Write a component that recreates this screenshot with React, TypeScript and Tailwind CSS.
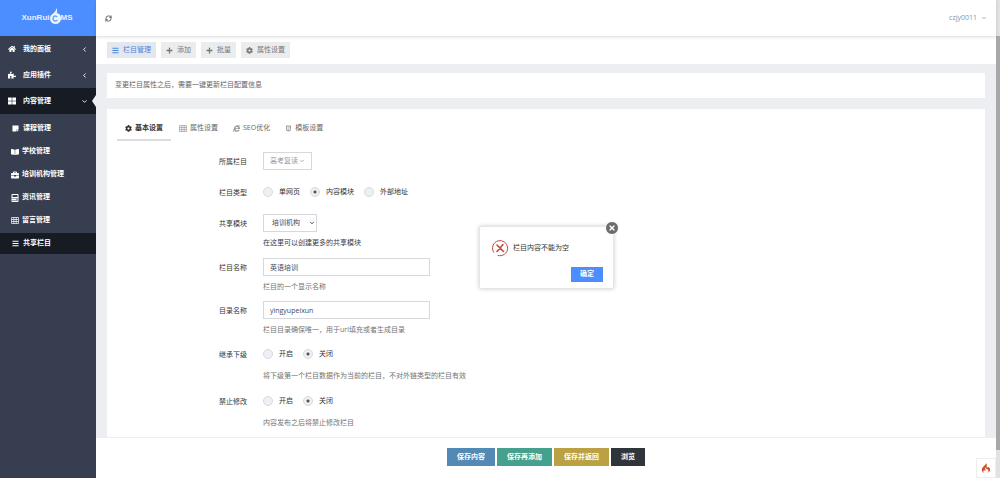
import { useState } from "react";
import type { ReactNode } from "react";
import {
  FaBars,
  FaBookOpen,
  FaBriefcase,
  FaCalculator,
  FaCog,
  FaHome,
  FaHtml5,
  FaInternetExplorer,
  FaPlus,
  FaPuzzlePiece,
  FaStickyNote,
  FaThLarge,
} from "react-icons/fa";
import { SiCodeigniter } from "react-icons/si";
import { ChevronDown, ChevronLeft, RefreshCw, X } from "lucide-react";

function GridIcon() {
  return (
    <svg viewBox="0 0 8 7" className="h-[7px] w-2" fill="none" stroke="currentColor" strokeWidth="0.7">
      <path d="M.5.5h7v6h-7zM.5 2.5h7M.5 4.500h7M2.800.5v6M5.200.5v6" />
    </svg>
  );
}

const menu = [
  { label: "我的面板", icon: <FaHome />, open: false },
  { label: "应用插件", icon: <FaPuzzlePiece />, open: false },
  { label: "内容管理", icon: <FaThLarge />, open: true },
];

const subMenu = [
  { label: "课程管理", icon: <FaStickyNote size={7} />, narrow: true },
  { label: "学校管理", icon: <FaBookOpen size={8} /> },
  { label: "培训机构管理", icon: <FaBriefcase size={8} /> },
  { label: "资讯管理", icon: <FaCalculator size={8} /> },
  { label: "留言管理", icon: <GridIcon /> },
  { label: "共享栏目", icon: <FaBars size={7} />, narrow: true, active: true },
];

const toolbar = [
  { label: "栏目管理", icon: <FaBars />, active: true },
  { label: "添加", icon: <FaPlus /> },
  { label: "批量", icon: <FaPlus /> },
  { label: "属性设置", icon: <FaCog /> },
];

const tabs = [
  { label: "基本设置", icon: <FaCog /> },
  { label: "属性设置", icon: <GridIcon /> },
  { label: "SEO优化", icon: <FaInternetExplorer /> },
  { label: "模板设置", icon: <FaHtml5 /> },
];

function Logo() {
  return (
    <a
      href="#"
      className="flex h-9 items-center justify-center bg-[#4c8dff] pr-0.5 font-['Liberation_Sans',sans-serif] text-[8px] font-bold text-[#e8f0ff]"
    >
      <span>XunRui</span>
      <svg viewBox="0 0 22 32" className="mb-1 h-4 w-[11px]" fill="none">
        <path
          d="M13 0c2 4 1 7 1 10 5 1 8 5 8 11a11 11 0 0 1-22 0c0-4 2-7 5-9 4-3 7-6 8-12z"
          fill="#e8f4ff"
        />
        <path d="M14.5 17.5a5 5 0 1 0 0 7" stroke="#5f9bf0" strokeWidth="2.5" />
      </svg>
      <span>MS</span>
    </a>
  );
}

function Sidebar() {
  return (
    <aside className="w-24 shrink-0 bg-[#373e4f] text-white">
      <Logo />
      <nav className="font-bold">
        {menu.map((item) => (
          <a
            key={item.label}
            href="#"
            className={`relative flex h-[26px] items-center pr-2 pl-2 ${item.open ? "bg-[#161b24]" : ""}`}
          >
            <span className="w-[15px] text-[8px]">{item.icon}</span>
            <span className="flex-1">{item.label}</span>
            {item.open ? <ChevronDown size={7} strokeWidth={3} /> : <ChevronLeft size={7} strokeWidth={3} />}
            {item.open && (
              <svg viewBox="0 0 4 12" className="absolute top-[7px] right-0 h-3 w-1" fill="#eceef1">
                <path d="M4 0v12L0 6z" />
              </svg>
            )}
          </a>
        ))}
        <div className="flex flex-col gap-0.5 pt-1">
          {subMenu.map((item) => (
            <a
              key={item.label}
              href="#"
              className={`flex h-[21px] items-center ${item.narrow ? "gap-1 pl-3" : "gap-[3px] pl-[11px]"} ${item.active ? "bg-[#161b24]" : ""}`}
            >
              {item.icon}
              <span>{item.label}</span>
            </a>
          ))}
        </div>
      </nav>
    </aside>
  );
}

type FieldProps = {
  label: string;
  htmlFor?: string;
  className: string;
  help?: string;
  helpClass?: string;
  children: ReactNode;
};

function Field({ label, htmlFor, className, help, helpClass = "mt-[5px] text-[#737373]", children }: FieldProps) {
  return (
    <div className={`flex gap-4 ${className}`}>
      <label htmlFor={htmlFor} className="flex h-5 w-[130px] shrink-0 items-center justify-end text-[#333]">
        {label}
      </label>
      <div>
        <div className="flex h-[18px] items-center">{children}</div>
        {help && <p className={`leading-3 ${helpClass}`}>{help}</p>}
      </div>
    </div>
  );
}

function Radios({ name, options, checked }: { name: string; options: string[]; checked: string }) {
  const [value, setValue] = useState(checked);
  return (
    <div role="radiogroup" className="flex gap-2.5 text-[#333]">
      {options.map((option) => (
        <label key={option} className="flex items-center gap-1.5">
          <input
            type="radio"
            name={name}
            checked={value === option}
            onChange={() => setValue(option)}
            className="h-2.5 w-2.5 appearance-none rounded-full border border-[#d5d9de] bg-[#edf0f4] checked:bg-[radial-gradient(circle,#555_1px,#edf0f4_2px)]"
          />
          {option}
        </label>
      ))}
    </div>
  );
}

const inputStyle = "h-[18px] w-[167px] border border-[#d5d9de] bg-white px-1.5 text-[#444a5c] outline-none";
const radioHelp = "mt-[7px] text-[#737373]";

function CategoryForm() {
  return (
    <form className="pt-[11px]">
      <Field label="所属栏目" className="mb-[11px]" htmlFor="parent">
        <button id="parent" type="button" className="flex h-[18px] items-center border border-[#d5d9de] px-1.5 text-[#999]">
          高考复读
          <ChevronDown size={6} strokeWidth={3} className="ml-px" />
        </button>
      </Field>
      <Field label="栏目类型" className="mb-[11px]">
        <Radios name="type" options={["单网页", "内容模块", "外部地址"]} checked="内容模块" />
      </Field>
      <Field
        label="共享模块"
        className="mb-[9px]"
        htmlFor="module"
        help="在这里可以创建更多的共享模块"
        helpClass="mt-[5px] text-[#333b4d]"
      >
        <span className="relative flex items-center">
          <select
            id="module"
            defaultValue="培训机构"
            className="h-[18px] w-[54px] appearance-none border border-[#d5d9de] bg-white pl-2 text-[#444a5c]"
          >
            <option>培训机构</option>
          </select>
          <ChevronDown size={6} strokeWidth={4} className="pointer-events-none absolute right-0.5 text-[#444a5c]" />
        </span>
      </Field>
      <Field label="栏目名称" className="mb-2" htmlFor="name" help="栏目的一个显示名称">
        <input id="name" defaultValue="英语培训" className={inputStyle} />
      </Field>
      <Field label="目录名称" className="mb-[9px]" htmlFor="dirname" help="栏目目录确保唯一，用于url填充或者生成目录">
        <input id="dirname" defaultValue="yingyupeixun" className={inputStyle} />
      </Field>
      <Field
        label="继承下级"
        className="mb-2.5"
        help="将下级第一个栏目数据作为当前的栏目，不对外链类型的栏目有效"
        helpClass={radioHelp}
      >
        <Radios name="inherit" options={["开启", "关闭"]} checked="关闭" />
      </Field>
      <Field label="禁止修改" className="mb-1" help="内容发布之后将禁止修改栏目" helpClass={radioHelp}>
        <Radios name="lock" options={["开启", "关闭"]} checked="关闭" />
      </Field>
    </form>
  );
}

function Alert({ onClose }: { onClose: () => void }) {
  return (
    <div
      role="alertdialog"
      className="absolute top-[226px] left-[479px] w-[135px] rounded-xs border border-[#e6e6e6] bg-white px-2.5 pt-3 pb-1.5 shadow-[0_0_4px_#00000033]"
    >
      <button
        aria-label="关闭"
        onClick={onClose}
        className="absolute -top-1.5 -right-1.5 flex h-3.5 w-3.5 items-center justify-center rounded-full border border-white bg-[#6c6c6c] text-white"
      >
        <X size={8} strokeWidth={4} />
      </button>
      <div className="flex items-center gap-1 pl-px text-[#333]">
        <svg viewBox="0 0 18 18" className="h-[18px] w-[18px]" fill="none" stroke="#c44a41" strokeLinecap="round">
          <path d="M2.6 13.2A7.6 7.6 0 1 1 7 16.5" strokeWidth="1" />
          <path d="M6 6l6.5 6.5M12 5.5L6 12.5" strokeWidth="1.6" />
        </svg>
        <p>栏目内容不能为空</p>
      </div>
      <div className="mt-2.5 flex justify-end">
        <button onClick={onClose} className="h-[15px] w-8 bg-[#4c8dff] font-bold text-white">
          确定
        </button>
      </div>
    </div>
  );
}

export default function App() {
  const [activeTab, setActiveTab] = useState("基本设置");
  const [showAlert, setShowAlert] = useState(true);

  return (
    <div
      lang="zh-CN"
      className="relative flex min-h-screen bg-[#eceef1] font-['Open_Sans','Noto_Sans_CJK_SC',sans-serif] text-[7px]"
    >
      <Sidebar />

      <div className="flex min-w-0 flex-1 flex-col">
        <header className="z-10 flex h-9 items-center justify-between bg-white pr-[9px] pl-[9px] shadow-[0_1px_3px_#00000026]">
          <button aria-label="刷新" className="text-[#555]">
            <RefreshCw size={7} strokeWidth={3} />
          </button>
          <button className="flex items-center gap-1 text-[#7f96ac]">
            czjy0011
            <ChevronDown size={6} strokeWidth={3} />
          </button>
        </header>

        <div className="flex h-7 items-center gap-[5px] bg-white pl-[11px]">
          {toolbar.map((item) => (
            <button
              key={item.label}
              className={`flex h-4 items-center gap-1 px-[5px] ${item.active ? "bg-[#e4e8ee] text-[#4a86dc]" : "bg-[#ebecee] text-[#777]"}`}
            >
              {item.icon}
              {item.label}
            </button>
          ))}
        </div>

        <main className="flex flex-1 flex-col gap-[11px] px-[11px] pt-[9px]">
          <p className="flex h-[25px] items-center bg-white px-2 text-[#666]">
            变更栏目属性之后，需要一键更新栏目配置信息
          </p>
          <section className="flex-1 bg-white px-2.5 pt-2">
            <div className="flex">
              {tabs.map((tab) => (
                <button
                  key={tab.label}
                  onClick={() => setActiveTab(tab.label)}
                  className={`flex h-6 items-center gap-[3px] border-b-2 ${
                    activeTab === tab.label
                      ? "mr-2 border-[#dcdddf] px-2 font-bold text-[#333]"
                      : "mr-[15px] border-transparent text-[#666]"
                  }`}
                >
                  <span className={activeTab === tab.label ? "" : "text-[#999]"}>{tab.icon}</span>
                  {tab.label}
                </button>
              ))}
            </div>
            <CategoryForm />
          </section>
        </main>

        <footer className="relative flex h-[41px] items-center justify-center gap-0.5 border-t border-[#eceef1] bg-white pb-0.5 font-bold text-white">
          <button className="h-[18px] bg-[#5389b5] px-2.5">保存内容</button>
          <button className="h-[18px] bg-[#45a18e] px-2.5">保存再添加</button>
          <button className="h-[18px] bg-[#bca144] px-2.5">保存并返回</button>
          <button className="h-[18px] bg-[#2f353b] px-2.5">浏览</button>
          <a
            href="#"
            aria-label="CodeIgniter"
            className="absolute right-0 bottom-0 flex h-5 w-5 items-center justify-center border border-[#eee] bg-white text-[10px] text-[#c94f26]"
          >
            <SiCodeigniter />
          </a>
        </footer>
      </div>

      <div className="flex w-1 shrink-0 flex-col bg-[#e2e2e2] pt-9">
        <div className="mb-7 flex-1 bg-[#a8a8a8]" />
      </div>

      {showAlert && <Alert onClose={() => setShowAlert(false)} />}
    </div>
  );
}
